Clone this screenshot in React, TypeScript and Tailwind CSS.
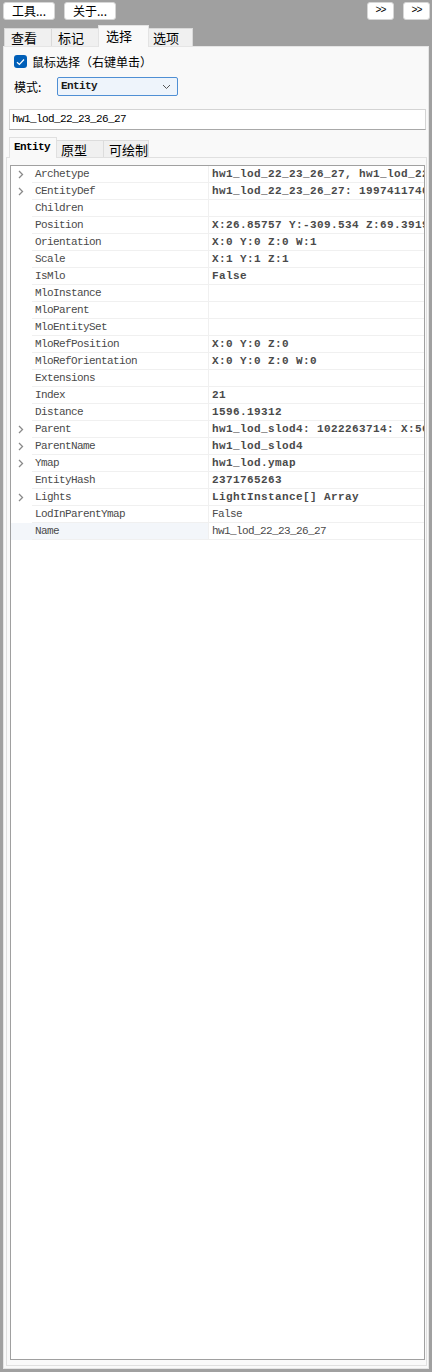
import React from "react";

type Row = { name: string; value: string; bold?: boolean; exp?: boolean };

const rows: Row[] = [
  { name: "Archetype", value: "hw1_lod_22_23_26_27, hw1_lod_22_23_26_27", bold: true, exp: true },
  { name: "CEntityDef", value: "hw1_lod_22_23_26_27: 1997411740: X:26.85757", bold: true, exp: true },
  { name: "Children", value: "" },
  { name: "Position", value: "X:26.85757 Y:-309.534 Z:69.39196", bold: true },
  { name: "Orientation", value: "X:0 Y:0 Z:0 W:1", bold: true },
  { name: "Scale", value: "X:1 Y:1 Z:1", bold: true },
  { name: "IsMlo", value: "False", bold: true },
  { name: "MloInstance", value: "" },
  { name: "MloParent", value: "" },
  { name: "MloEntitySet", value: "" },
  { name: "MloRefPosition", value: "X:0 Y:0 Z:0", bold: true },
  { name: "MloRefOrientation", value: "X:0 Y:0 Z:0 W:0", bold: true },
  { name: "Extensions", value: "" },
  { name: "Index", value: "21", bold: true },
  { name: "Distance", value: "1596.19312", bold: true },
  { name: "Parent", value: "hw1_lod_slod4: 1022263714: X:56.12345", bold: true, exp: true },
  { name: "ParentName", value: "hw1_lod_slod4", bold: true, exp: true },
  { name: "Ymap", value: "hw1_lod.ymap", bold: true, exp: true },
  { name: "EntityHash", value: "2371765263", bold: true },
  { name: "Lights", value: "LightInstance[] Array", bold: true, exp: true },
  { name: "LodInParentYmap", value: "False" },
  { name: "Name", value: "hw1_lod_22_23_26_27" },
];

const mono = "font-['Liberation_Mono','DejaVu_Sans_Mono',monospace]";
const cjk = "font-['Noto_Sans_CJK_SC','Noto_Sans',sans-serif]";

function Chevron() {
  return (
    <svg width="6" height="9" viewBox="0 0 6 9" className="block">
      <path d="M1 1 L4.5 4.5 L1 8" fill="none" stroke="#8a8a8a" strokeWidth="1.3" />
    </svg>
  );
}

export default function App() {
  return (
    <div className={`w-[432px] h-[1372px] bg-[#a0a0a0] flex flex-col overflow-hidden ${cjk}`}>
      {/* top buttons */}
      <div className="h-[25px] flex items-start pt-[2px] pl-[3px] pr-[2px] shrink-0">
        <div className="w-[52px] h-[18px] bg-white rounded-[3px] border border-[#d6d6d6] flex items-center justify-center text-[12px] leading-none text-black">
          工具...
        </div>
        <div className="ml-[9px] w-[52px] h-[18px] bg-white rounded-[3px] border border-[#d6d6d6] flex items-center justify-center text-[12px] leading-none text-black">
          关于...
        </div>
        <div className="flex-1" />
        <div className={`w-[27px] h-[18px] bg-white rounded-[3px] border border-[#d6d6d6] flex items-center justify-center text-[10px] leading-none text-black ${mono} tracking-[-1px]`}>
          &gt;&gt;
        </div>
        <div className={`ml-[9px] w-[27px] h-[18px] bg-white rounded-[3px] border border-[#d6d6d6] flex items-center justify-center text-[10px] leading-none text-black ${mono} tracking-[-1px]`}>
          &gt;&gt;
        </div>
      </div>

      {/* top tabs */}
      <div className="h-[21px] flex items-end pl-[4px] shrink-0 relative z-10">
        <div className="w-[47px] h-[18px] bg-[#f0f0f0] border-l border-t border-[#d9d9d9] pl-[6px] text-[13px] leading-[18px] text-black">查看</div>
        <div className="w-[47px] h-[18px] bg-[#f0f0f0] border-l border-t border-[#d9d9d9] pl-[6px] text-[13px] leading-[18px] text-black">标记</div>
        <div className="w-[51px] h-[22px] bg-[#f9f9f9] border-l border-t border-r border-[#e3e3e3] pl-[7px] text-[13px] leading-[19px] text-black -mb-[1px]">选择</div>
        <div className="w-[44px] h-[18px] bg-[#f0f0f0] border-t border-r border-[#d9d9d9] pl-[4px] text-[13px] leading-[18px] text-black">选项</div>
      </div>

      {/* main panel */}
      <div className="ml-[3px] w-[426px] h-[1323px] bg-[#f9f9f9] border border-[#e5e5e5] flex flex-col shrink-0">
        <div className="flex items-center pl-[10px] mt-[8px] h-[13px]">
          <div className="w-[13px] h-[13px] rounded-[3px] bg-[#005fb8] flex items-center justify-center">
            <svg width="9" height="8" viewBox="0 0 9 8">
              <path d="M1 4.2 L3.4 6.5 L8 1.5" fill="none" stroke="white" strokeWidth="1.2" />
            </svg>
          </div>
          <span className="ml-[5px] text-[12px] leading-none text-black">鼠标选择（右键单击）</span>
        </div>

        <div className="flex items-center pl-[10px] mt-[9px] h-[19px]">
          <span className="text-[12px] leading-none text-black w-[43px]">模式:</span>
          <div className="w-[121px] h-[19px] bg-[#eef4fb] border border-[#4f8fd4] rounded-[2px] flex items-center pl-[3px] pr-[6px]">
            <span className={`${mono} font-bold text-[11px] tracking-[-0.6px] text-[#1a1a1a] flex-1`}>Entity</span>
            <svg width="9" height="6" viewBox="0 0 9 6">
              <path d="M1 1 L4.5 4.5 L8 1" fill="none" stroke="#555" strokeWidth="1" />
            </svg>
          </div>
        </div>

        <div className="ml-[5px] w-[417px] h-[21px] mt-[13px] bg-white border border-[#d4d4d4] border-b-[#a8a8a8] flex items-center pl-[2px]">
          <span className={`${mono} text-[11px] tracking-[-0.6px] text-black`}>hw1_lod_22_23_26_27</span>
        </div>

        {/* inner tabs */}
        <div className="h-[21px] mt-[6px] ml-[5px] flex items-end relative z-10">
          <div className={`w-[48px] h-[21px] bg-[#f9f9f9] border-l border-t border-r border-[#e0e0e0] -mb-[1px] pl-[4px] leading-[18px] ${mono} font-bold text-[11px] tracking-[-0.6px] text-black`}>
            Entity
          </div>
          <div className="w-[46px] h-[17px] bg-[#f0f0f0] border-t border-[#dcdcdc] pl-[4px] text-[13px] leading-[17px] text-black">原型</div>
          <div className="w-[46px] h-[17px] bg-[#f0f0f0] border-t border-l border-r border-[#dcdcdc] pl-[5px] text-[13px] leading-[17px] text-black">可绘制</div>
        </div>

        <div className="ml-[2px] w-[421px] flex-1 mb-[2px] bg-[#f9f9f9] border border-[#e0e0e0] flex flex-col pt-[7px] pb-[5px] pl-[3px] pr-[1px]">
          <div className="flex-1 bg-white border border-[#a0a0a0] flex flex-col overflow-hidden">
            {rows.map((r, i) => {
              const last = i === rows.length - 1;
              return (
                <div key={r.name} className="h-[17px] flex shrink-0">
                  <div className={`w-[21px] h-[17px] flex items-center pl-[7px] ${last ? "bg-[#f3f6fa]" : ""}`}>
                    {r.exp ? <Chevron /> : null}
                  </div>
                  <div
                    className={`w-[177px] h-[17px] border-b border-r border-[#f0f0f0] pl-[3px] flex items-center whitespace-nowrap ${mono} text-[11px] tracking-[-0.6px] text-[#4a4a4a] ${last ? "bg-[#f3f6fa]" : ""}`}
                  >
                    {r.name}
                  </div>
                  <div
                    className={`flex-1 h-[17px] border-b border-[#f0f0f0] pl-[3px] flex items-center whitespace-nowrap overflow-hidden ${mono} text-[11px] text-[#4a4a4a] ${r.bold ? "font-bold tracking-[0.4px]" : "tracking-[-0.6px]"}`}
                  >
                    {r.value}
                  </div>
                </div>
              );
            })}
          </div>
        </div>
      </div>
    </div>
  );
}
